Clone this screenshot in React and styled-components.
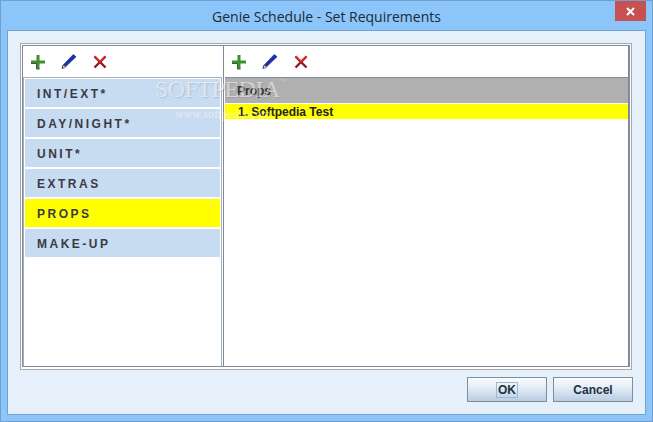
import styled, { createGlobalStyle } from "styled-components";

const GlobalStyle = createGlobalStyle`
	html, body {
		margin: 0;
		padding: 0;
		background: #8bc5f9;
	}
	* {
		box-sizing: border-box;
	}
`;

const categories = ["INT/EXT*", "DAY/NIGHT*", "UNIT*", "EXTRAS", "PROPS", "MAKE-UP"];

function PlusIcon() {
	return (
		<svg width="16" height="16" viewBox="0 0 16 16">
			<path d="M6.5 1h3v5.5H15v3H9.500V15h-3V9.500H1v-3h5.500z" fill="#3f8f2f" />
			<path d="M1 9.500h5.500V15h3" fill="none" stroke="#3c5a3a" strokeWidth="1" />
		</svg>
	);
}

function PenIcon() {
	return (
		<svg width="17" height="17" viewBox="0 0 17 17">
			<path d="M13 1l3 2.500L4 15l-3 1 .6-3z" fill="#1a2fa8" stroke="#14208a" strokeWidth=".6" />
			<rect x="2" y="13" width="2" height="2" fill="#f5e33a" />
		</svg>
	);
}

function CrossIcon() {
	return (
		<svg width="14" height="14" viewBox="0 0 14 14">
			<path d="M1.500 1.500L12.500 12.500" stroke="#8f1f1f" strokeWidth="2.400" />
			<path d="M12.500 1.500L1.500 12.500" stroke="#8f1f1f" strokeWidth="2.400" />
			<path d="M1.500 1L7 6.500L12.500 1" fill="none" stroke="#ee2a2a" strokeWidth="1.600" />
		</svg>
	);
}

function Toolbar({ inset }) {
	return (
		<ToolbarRow $inset={inset}>
			<ToolSlot><PlusIcon /></ToolSlot>
			<ToolSlot><PenIcon /></ToolSlot>
			<ToolSlot><CrossIcon /></ToolSlot>
		</ToolbarRow>
	);
}

export default function App() {
	return (
		<Window>
			<GlobalStyle />
			<TitleBar>
				<Title>Genie Schedule - Set Requirements</Title>
				<CloseButton>
					<svg width="9" height="9" viewBox="0 0 9 9">
						<path d="M1 1l7 7M8 1l-7 7" stroke="#fff" strokeWidth="2" />
					</svg>
				</CloseButton>
			</TitleBar>
			<Body>
				<GroupBox>
					<GroupInner>
						<LeftPane>
							<Toolbar inset={7} />
							<CategoryList>
								{categories.map((name) => (
									<Category key={name} $active={name === "PROPS"}>
										{name}
									</Category>
								))}
							</CategoryList>
						</LeftPane>
						<RightPane>
							<Toolbar inset={6} />
							<DetailPanel>
								<DetailHeader>Props</DetailHeader>
								<DetailRow>1. Softpedia Test</DetailRow>
							</DetailPanel>
						</RightPane>
					</GroupInner>
				</GroupBox>
				<ButtonRow>
					<DialogButton>
						<FocusRing>OK</FocusRing>
					</DialogButton>
					<DialogButton>Cancel</DialogButton>
				</ButtonRow>
			</Body>
			<WatermarkBig>SOFTPEDIA</WatermarkBig>
			<WatermarkTm>™</WatermarkTm>
			<WatermarkSmall>www.softpedia.com</WatermarkSmall>
		</Window>
	);
}

const Window = styled.div`
	position: relative;
	width: 653px;
	height: 422px;
	display: flex;
	flex-direction: column;
	background: #8bc5f9;
	border: 1px solid #6f9fd0;
	padding: 0 6px 6px 6px;
	overflow: hidden;
`;

const TitleBar = styled.div`
	position: relative;
	height: 29px;
	flex: none;
	display: flex;
	align-items: center;
	justify-content: center;
`;

const Title = styled.div`
	font-family: "Open Sans", sans-serif;
	font-size: 14px;
	color: #1c2a38;
	padding-top: 1px;
`;

const CloseButton = styled.div`
	position: absolute;
	top: 0;
	right: 0;
	width: 31px;
	height: 20px;
	display: flex;
	align-items: center;
	justify-content: center;
	background: #c75050;
`;

const Body = styled.div`
	flex: 1;
	display: flex;
	flex-direction: column;
	background: #e6f0fa;
	border: 1px solid #74a2d0;
	padding: 12px 12px 11px 12px;
`;

const GroupBox = styled.div`
	height: 327px;
	flex: none;
	margin-right: 1px;
	background: #fff;
	border: 1px solid #a8a8a8;
	padding: 1px 1px 2px;
`;

const GroupInner = styled.div`
	height: 100%;
	display: flex;
	border: 1px solid #7c8c9c;
	border-width: 1px 2px 1px 1px;
`;

const LeftPane = styled.div`
	width: 201px;
	flex: none;
	display: flex;
	flex-direction: column;
	border-right: 1px solid #7c8c9c;
`;

const RightPane = styled.div`
	flex: 1;
	min-width: 0;
	display: flex;
	flex-direction: column;
	padding-left: 1px;
`;

const ToolbarRow = styled.div`
	height: 31px;
	flex: none;
	display: flex;
	align-items: center;
	gap: 15px;
	padding-left: ${(props) => props.$inset}px;
	background: #fff;
`;

const ToolSlot = styled.div`
	width: 16px;
	height: 17px;
	display: flex;
	align-items: center;
	justify-content: center;
`;

const CategoryList = styled.div`
	flex: 1;
	display: flex;
	flex-direction: column;
	gap: 2px;
	margin-right: 1px;
	padding: 1px 1px 0;
	background: #fff;
	border: 1px solid #a8b0b8;
	border-bottom: none;
`;

const Category = styled.div`
	height: 28px;
	flex: none;
	display: flex;
	align-items: center;
	padding: 1px 0 0 12px;
	background: ${(props) => (props.$active ? "#ffff00" : "#c7dbf1")};
	color: #3a3a44;
	font-family: "Liberation Sans", sans-serif;
	font-size: 12px;
	font-weight: bold;
	letter-spacing: 2.5px;
`;

const DetailPanel = styled.div`
	flex: 1;
	background: #fff;
	border-top: 1px solid #7c8c9c;
`;

const DetailHeader = styled.div`
	height: 25px;
	display: flex;
	align-items: center;
	padding-left: 12px;
	background: #b0b0b0;
	color: #333;
	font-family: "Liberation Sans", sans-serif;
	font-size: 12px;
	font-weight: bold;
`;

const DetailRow = styled.div`
	height: 15px;
	margin-top: 1px;
	display: flex;
	align-items: center;
	padding-left: 13px;
	background: #ffff00;
	color: #222;
	font-family: "Liberation Sans", sans-serif;
	font-size: 12px;
	font-weight: bold;
`;

const ButtonRow = styled.div`
	display: flex;
	justify-content: flex-end;
	gap: 6px;
	margin-top: 7px;
`;

const DialogButton = styled.div`
	width: 80px;
	height: 25px;
	display: flex;
	align-items: center;
	justify-content: center;
	border: 1px solid #7c8ea0;
	background: linear-gradient(#fafcfe, #e4edf6 40%, #b8cde2);
	color: #22303e;
	font-family: "Liberation Sans", sans-serif;
	font-size: 12px;
	font-weight: bold;
`;

const FocusRing = styled.span`
	display: block;
	padding: 0 1px;
	line-height: 14px;
	border: 1px solid #a3b8d0;
`;

const WatermarkBig = styled.div`
	position: absolute;
	left: 154px;
	top: 75px;
	font-family: "Liberation Serif", serif;
	font-size: 24px;
	letter-spacing: -0.5px;
	color: rgba(255, 255, 255, 0.5);
	text-shadow: 1px 1px 1px rgba(120, 120, 120, 0.25);
	pointer-events: none;
`;

const WatermarkTm = styled.div`
	position: absolute;
	left: 277px;
	top: 76px;
	font-family: "Liberation Sans", sans-serif;
	font-size: 8px;
	color: rgba(200, 200, 200, 0.8);
	pointer-events: none;
`;

const WatermarkSmall = styled.div`
	position: absolute;
	left: 174px;
	top: 106px;
	font-family: "Liberation Serif", serif;
	font-size: 12px;
	color: rgba(255, 255, 255, 0.5);
	pointer-events: none;
`;
